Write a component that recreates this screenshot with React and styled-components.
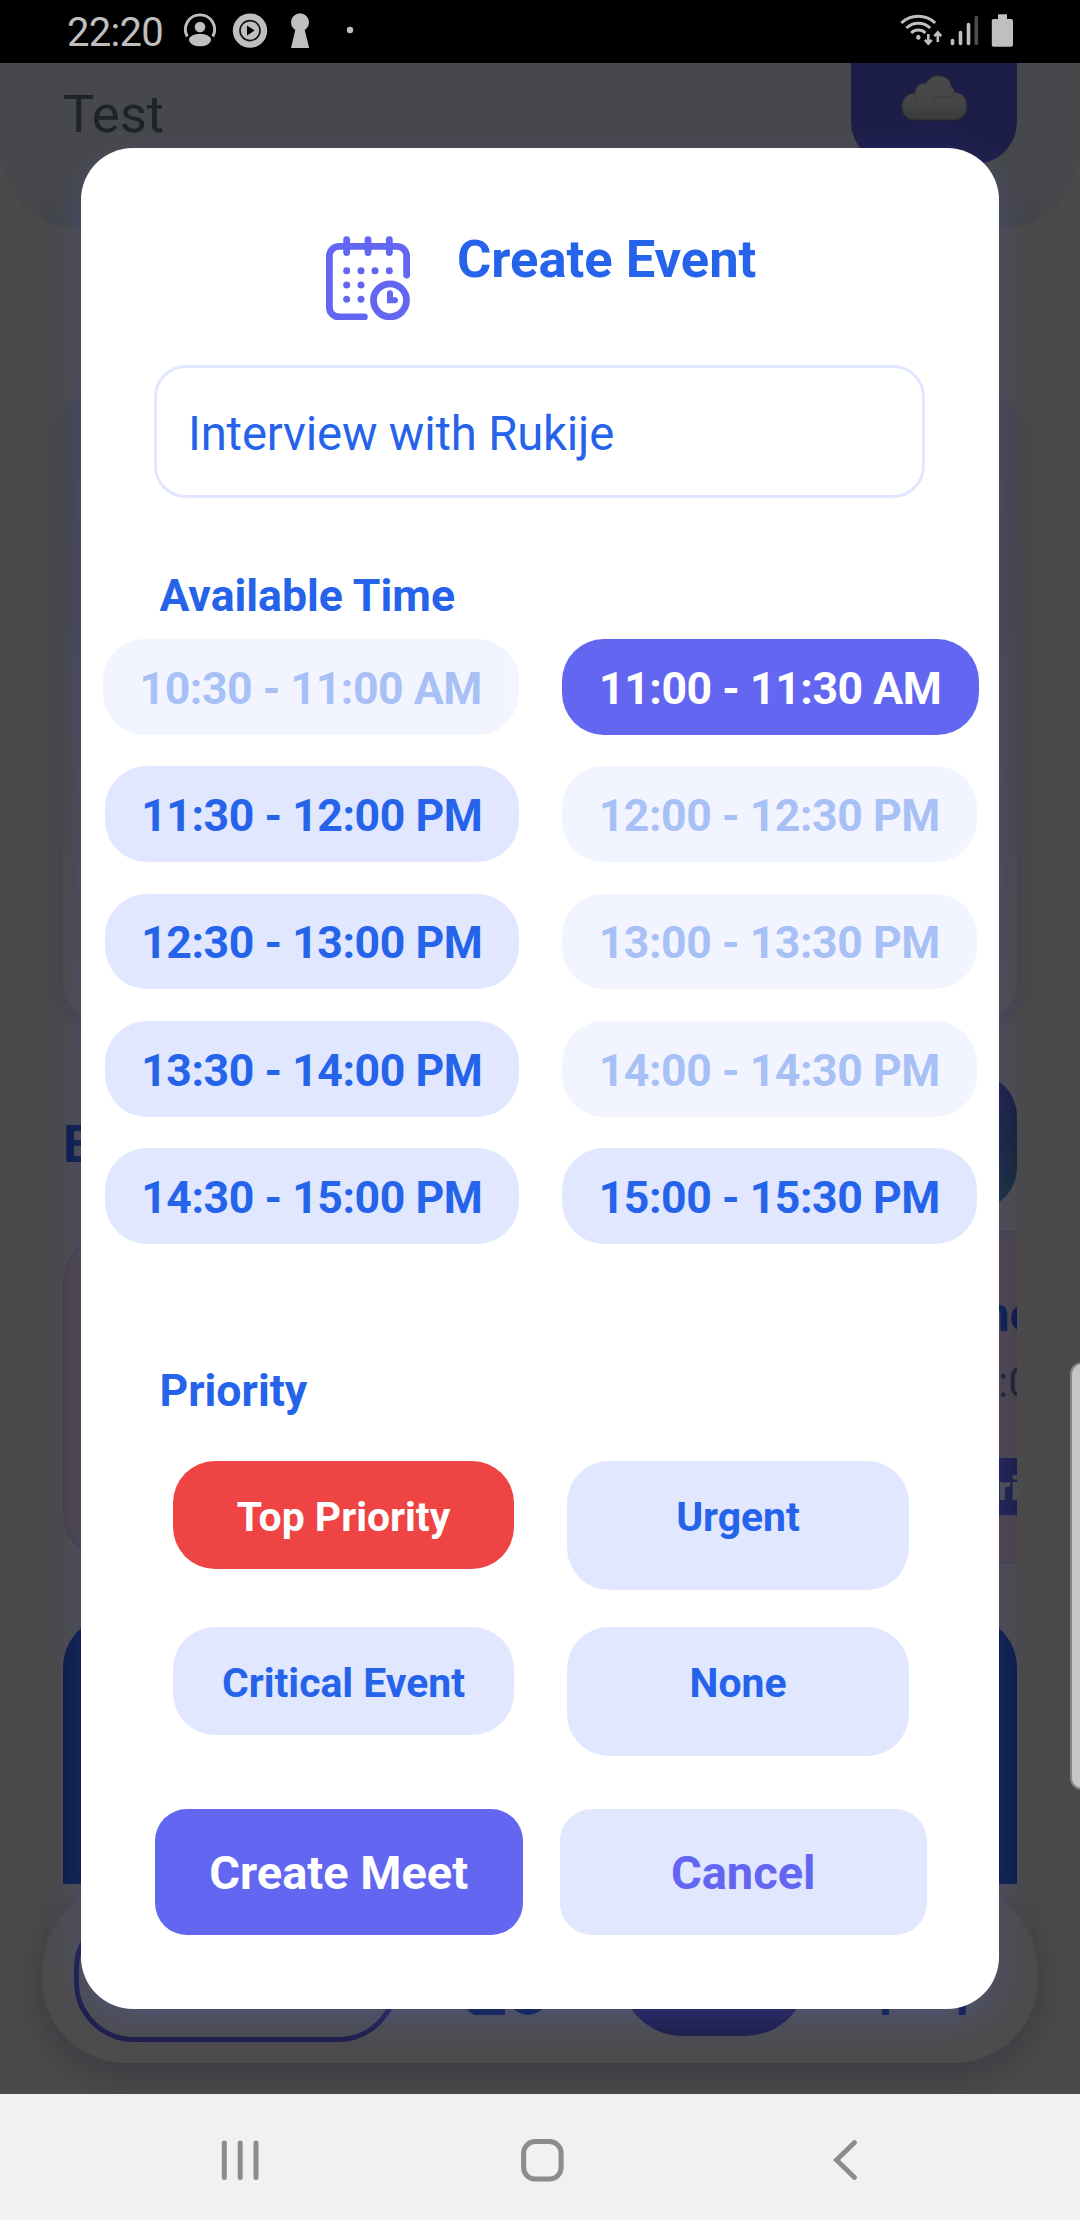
import React from "react";
import styled, { createGlobalStyle } from "styled-components";

const GlobalStyle = createGlobalStyle`
  * { box-sizing: border-box; }
  html, body { margin: 0; padding: 0; background: #000; }
  body { font-family: Roboto, "Noto Sans", sans-serif; }
  button, input { font-family: inherit; border: 0; margin: 0; padding: 0; }
`;

const Phone = styled.div`
  width: 1080px;
  height: 2220px;
  display: flex;
  flex-direction: column;
  overflow: hidden;
`;

/* ---------- system bars ---------- */

const StatusBar = styled.header`
  height: 63px;
  flex: none;
  background: #000;
  color: #bfbfbf;
  display: flex;
  justify-content: space-between;
  padding: 0 64px 0 67px;
`;

const StatusGroup = styled.div`
  display: flex;
  align-items: flex-start;
  padding-top: 10px;
`;

const Clock = styled.span`
  font-size: 40px;
  line-height: 45px;
  width: 113px;
  letter-spacing: -0.7px;
`;

const NavBar = styled.nav`
  height: 126px;
  flex: none;
  background: #f1f1f1;
  display: flex;
  align-items: flex-start;
  padding: 43px 0 0 218px;
`;

const NavIcon = styled.svg`
  width: 46px;
  height: 46px;
  margin-right: ${(p) => p.$after || 0}px;
`;

/* ---------- screen behind the dialog ---------- */

const Stage = styled.div`
  position: relative;
  height: 2031px;
  flex: none;
  overflow: hidden;
`;

const Screen = styled.main`
  height: 100%;
  background: #f8f8f8;
  display: flex;
  flex-direction: column;
`;

const ProfileHeader = styled.section`
  height: 165px;
  flex: none;
  background: linear-gradient(#eef0fb 0, #ecf0fb 125px, #dfe5f6 165px);
  border-radius: 0 0 79px 79px;
  display: flex;
  justify-content: space-between;
  align-items: flex-start;
  padding: 0 63px;
`;

const ProfileName = styled.div`
  font-size: 52.5px;
  line-height: 62px;
  margin-top: 20px;
  color: #64748b;
`;

const WeatherTile = styled.div`
  width: 166px;
  height: 101px;
  background: #6366f1;
  border-radius: 0 0 42px 42px;
  padding: 12px 0 0 50px;
`;

const Body = styled.div`
  padding: 0 63px;
  display: flex;
  flex-direction: column;
`;

const SummaryCard = styled.div`
  margin-top: 161px;
  height: 634px;
  border-radius: 42px;
  background: linear-gradient(#e4e7f9, #eeeef8 50%, #fcf8fc);
  box-shadow: 0 6px 24px rgba(90, 100, 180, 0.24);
`;

const SectionRow = styled.div`
  margin-top: 51px;
  height: 136px;
  display: flex;
  justify-content: space-between;
  align-items: center;
`;

const SectionTitle = styled.h2`
  margin: 0;
  padding-top: 4px;
  font-size: 52.5px;
  line-height: 62px;
  font-weight: 700;
  color: #2563eb;
`;

const GradientButton = styled.div`
  width: 240px;
  height: 136px;
  border-radius: 42px;
  background: linear-gradient(172deg, #5a5ce6 15%, #5078bc 60%, #5598bc 100%);
`;

const EventStrip = styled.div`
  margin-top: 21px;
  height: 333px;
  display: flex;
  justify-content: space-between;
`;

const EventCard = styled.div`
  width: ${(p) => p.$w}px;
  height: 333px;
  background: #f8dde8;
  border: 2px solid #d5d8f8;
  border-right-width: ${(p) => (p.$clipped ? 0 : 2)}px;
  border-radius: ${(p) => (p.$clipped ? "53px 0 0 53px" : "53px")};
  overflow: hidden;
  display: flex;
  flex-direction: column;
  align-items: flex-start;
`;

const EventName = styled.div`
  width: 34px;
  margin: 54px 0 0 auto;
  white-space: nowrap;
  font-size: 47.25px;
  line-height: 56px;
  font-weight: 700;
  color: #2563eb;
`;

const EventTime = styled.div`
  width: 19px;
  margin: 15px 0 0 auto;
  white-space: nowrap;
  font-size: 42px;
  line-height: 50px;
  color: #64748b;
`;

const EventTag = styled.div`
  width: 60px;
  height: 57px;
  margin: 50px 0 0 auto;
  padding-left: 41px;
  white-space: nowrap;
  font-size: 34px;
  line-height: 61px;
  font-weight: 700;
  color: #fff;
  background: #6366f1;
`;

const NewsBlock = styled.div`
  margin-top: 51px;
  height: 269px;
  background: #2563eb;
  border-radius: 53px 53px 0 0;
`;

const TabBar = styled.div`
  margin: 2px 42px 0;
  height: 177px;
  flex: none;
  border-radius: 84px;
  background: #fff;
  box-shadow: 0 12px 34px rgba(60, 60, 150, 0.28);
  display: flex;
  align-items: flex-start;
  padding: 23px 0 0 32px;
`;

const TabPill = styled.div`
  width: 324px;
  height: 133px;
  border-radius: 60px;
  border: 5px solid #6366f1;
`;

const TabIcon = styled.svg`
  width: 84px;
  height: 84px;
  margin: 22px 0 0 ${(p) => p.$before}px;
`;

const TabAction = styled.div`
  width: 188px;
  height: 127px;
  margin-left: 72px;
  border-radius: 63px;
  background: #6366f1;
`;

const Scrim = styled.div`
  position: absolute;
  inset: 0;
  background: rgba(0, 0, 0, 0.7);
`;

const EdgeHandle = styled.div`
  position: absolute;
  left: 1070px;
  top: 1299px;
  width: 24px;
  height: 428px;
  border-radius: 14px;
  border: 2px solid #858585;
  background: #c6c6c6;
`;

/* ---------- dialog ---------- */

const Dialog = styled.form`
  position: absolute;
  left: 81px;
  top: 85px;
  width: 918px;
  height: 1861px;
  border-radius: 52px;
  background: #fff;
  box-shadow: 0 12px 38px rgba(99, 102, 241, 0.23);
  display: flex;
  flex-direction: column;
  padding: 80px 0 0;
`;

const DialogHeader = styled.div`
  display: flex;
  align-items: flex-start;
  height: 92px;
  padding-left: 245px;
  gap: 47px;
`;

const CalendarIcon = styled.svg`
  width: 84px;
  height: 84.3px;
  margin-top: 7.7px;
`;

const DialogTitle = styled.h1`
  margin: 0;
  font-size: 52.5px;
  line-height: 62px;
  font-weight: 700;
  color: #2563eb;
`;

const NameInput = styled.input`
  display: block;
  width: 771px;
  height: 133px;
  margin: 45px 0 0 73px;
  border: 3px solid #e0e7ff;
  border-radius: 32px;
  padding: 4px 30px 0 31px;
  font-size: 47.25px;
  letter-spacing: -0.17px;
  color: #2563eb;
  outline: none;
`;

const Label = styled.div`
  font-size: 44.6px;
  line-height: 52px;
  font-weight: 700;
  color: #2563eb;
  margin: ${(p) => p.$top}px 0 0 78.5px;
`;

const SlotGrid = styled.div`
  margin-top: 17px;
  padding-left: 22px;
  display: grid;
  grid-template-columns: 416px 417px;
  column-gap: 43px;
  row-gap: 31.5px;
`;

const slotTone = {
  free: ["#e0e7ff", "#2563eb", 1],
  taken: ["#e0e7ff", "#2563eb", 0.4],
  picked: ["#6366f1", "#fff", 1],
};

const Slot = styled.button`
  width: ${(p) => (p.$label.endsWith("AM") ? 416.5 : 414.5)}px;
  height: 95.8px;
  justify-self: ${(p) => (p.$col ? "start" : "end")};
  border-radius: 42px;
  padding-top: 4px;
  white-space: nowrap;
  font-size: 44.6px;
  letter-spacing: -0.45px;
  line-height: 52px;
  font-weight: 700;
  background: ${(p) => slotTone[p.$tone][0]};
  color: ${(p) => slotTone[p.$tone][1]};
  opacity: ${(p) => slotTone[p.$tone][2]};
`;

const PriorityGrid = styled.div`
  margin-top: 44px;
  padding-left: 92px;
  display: grid;
  grid-template-columns: 341px 342px;
  column-gap: 53px;
  row-gap: 36.3px;
`;

const PriorityButton = styled.button`
  height: ${(p) => (p.$tall ? 129.5 : 108.5)}px;
  display: flex;
  align-items: flex-start;
  justify-content: center;
  padding-top: 31px;
  border-radius: 42px;
  white-space: nowrap;
  font-size: 40.9px;
  line-height: 50px;
  font-weight: 700;
  background: ${(p) => (p.$picked ? "#ef4444" : "#e0e7ff")};
  color: ${(p) => (p.$picked ? "#fff" : "#2563eb")};
`;

const Actions = styled.div`
  margin: 52.7px 0 0 74px;
  display: flex;
  gap: 37px;
`;

const ActionButton = styled.button`
  width: 367.5px;
  height: 125.6px;
  padding-top: 3px;
  border-radius: 32px;
  font-size: 47px;
  line-height: 56px;
  font-weight: 700;
  background: ${(p) => (p.$primary ? "#6366f1" : "#e0e7ff")};
  color: ${(p) => (p.$primary ? "#fff" : "#6366f1")};
`;

const slots = [
  ["10:30 - 11:00 AM", "taken"],
  ["11:00 - 11:30 AM", "picked"],
  ["11:30 - 12:00 PM", "free"],
  ["12:00 - 12:30 PM", "taken"],
  ["12:30 - 13:00 PM", "free"],
  ["13:00 - 13:30 PM", "taken"],
  ["13:30 - 14:00 PM", "free"],
  ["14:00 - 14:30 PM", "taken"],
  ["14:30 - 15:00 PM", "free"],
  ["15:00 - 15:30 PM", "free"],
];

const priorities = ["Top Priority", "Urgent", "Critical Event", "None"];

const dots = [
  [170, 181], [213, 181], [255, 181], [298, 181],
  [170, 224], [213, 224], [170, 267], [213, 267],
];

function StatusLeftIcons() {
  return (
    <svg width="180" height="44" viewBox="180 10 180 44" fill="#bfbfbf">
      <path d="M187.2 36.5a14.6 14.6 0 1 1 25.6 0" fill="none" stroke="#bfbfbf" strokeWidth="2.9" />
      <circle cx="200" cy="27" r="5.3" />
      <ellipse cx="200" cy="40" rx="11" ry="6.3" />
      <circle cx="250" cy="30.6" r="17.2" />
      <circle cx="250" cy="30.6" r="10" fill="none" stroke="#111" strokeWidth="1.6" />
      <path d="M247 25.6v10l7.6-5z" fill="#000" />
      <circle cx="300" cy="22.3" r="9" />
      <path d="M296 27h8l5.2 21h-18.2z" />
      <circle cx="350" cy="30" r="3.2" />
    </svg>
  );
}

function StatusRightIcons() {
  return (
    <svg width="118" height="44" viewBox="898 10 118 44" fill="none" stroke="#bfbfbf" strokeWidth="3">
      <path d="M901.4 23a24.5 24.5 0 0 1 33.8 0" />
      <path d="M906.4 28a17.3 17.3 0 0 1 23.8 0" />
      <path d="M911.2 33a10.2 10.2 0 0 1 14.2 0" />
      <ellipse cx="918.3" cy="37.3" rx="2.2" ry="2.5" fill="#bfbfbf" stroke="none" />
      <path d="M928.3 34v9M924.8 39.8l3.5 3.7 3.5-3.7M937.8 42v-9M934.3 36.2l3.5-3.7 3.5 3.7" strokeWidth="2.6" />
      <g strokeWidth="3.6" strokeLinecap="round">
        <path d="M952.5 40.5v3M960.5 32.5v11M968.5 24.5v19" />
        <path d="M976.3 17.5v26" stroke="#4d4d4d" />
      </g>
      <path d="M998 14.2h9v4.8h4.2a1.8 1.8 0 0 1 1.8 1.8v24.2a1.8 1.8 0 0 1-1.8 1.8h-17.6a1.8 1.8 0 0 1-1.8-1.8v-24.2a1.8 1.8 0 0 1 1.8-1.8h4.4z" fill="#bfbfbf" stroke="none" />
    </svg>
  );
}

function Cloud() {
  return (
    <svg width="67" height="46" viewBox="0 0 67 46">
      <defs>
        <linearGradient id="cloudFill" x1="0" y1="0" x2="0" y2="1">
          <stop offset="0" stopColor="#f4f5f5" />
          <stop offset="0.6" stopColor="#e6e8ea" />
          <stop offset="1" stopColor="#b9c1c8" />
        </linearGradient>
      </defs>
      <path
        d="M14 45C5 45 .8 38.5 .8 31.5c0-7 5.2-13 12.7-13.5C14.5 11 19 8 25.5 8 28 3 32 .8 37.5 .8c7 0 12.5 4.5 12.7 10.7 2 1.5 3 3.5 3.3 5.7C61 17 66 23.5 66 31c0 8-5 14-13.5 14z"
        fill="url(#cloudFill)" stroke="#8e959b" strokeWidth="1"
      />
      <path d="M31 27c3-5 9-7 14-4.5M15 18c-2 3-1 7 0 8M45 23c3-.5 7-3 9-5.5" fill="none" stroke="#cdd1d4" strokeWidth="1.5" />
    </svg>
  );
}

export default function App() {
  return (
    <Phone>
      <GlobalStyle />
      <StatusBar>
        <StatusGroup>
          <Clock>22:20</Clock>
          <StatusLeftIcons />
        </StatusGroup>
        <StatusGroup>
          <StatusRightIcons />
        </StatusGroup>
      </StatusBar>

      <Stage>
        <Screen>
          <ProfileHeader>
            <ProfileName>Test</ProfileName>
            <WeatherTile>
              <Cloud />
            </WeatherTile>
          </ProfileHeader>
          <Body>
            <SummaryCard />
            <SectionRow>
              <SectionTitle>E</SectionTitle>
              <GradientButton />
            </SectionRow>
            <EventStrip>
              <EventCard $w={600} />
              <EventCard $w={300} $clipped>
                <EventName>ne</EventName>
                <EventTime>:0</EventTime>
                <EventTag>ri</EventTag>
              </EventCard>
            </EventStrip>
            <NewsBlock />
          </Body>
          <TabBar>
            <TabPill />
            <TabIcon $before={66} viewBox="0 0 84 84" fill="none" stroke="#2563eb" strokeWidth="7">
              <path d="M14 4h50v20M3.5 15v54a12 12 0 0 0 12 12H41" />
              <circle cx="64" cy="63" r="17.5" />
            </TabIcon>
            <TabAction />
            <TabIcon $before={74} viewBox="0 0 84 84" fill="none" stroke="#2563eb" strokeWidth="7">
              <path d="M3.5 84V72a20 20 0 0 1 20-20h38a20 20 0 0 1 19 20l-.3 12" />
              <circle cx="42" cy="24" r="16" />
            </TabIcon>
          </TabBar>
        </Screen>

        <Scrim />

        <Dialog onSubmit={(e) => e.preventDefault()}>
          <DialogHeader>
            <CalendarIcon viewBox="108 77 252 253" fill="none" stroke="#6366f1" strokeWidth="20.5" strokeLinecap="round">
              <path d="M350 194V137a29 29 0 0 0-29-29H147a29 29 0 0 0-29 29V291a29 29 0 0 0 29 29H223" />
              <path d="M170 88v39M234 88v39M298 88v39" />
              <circle cx="300" cy="270" r="49.5" />
              <path d="M300 249v20.5h15" strokeWidth="18" />
              {dots.map(([x, y]) => (
                <circle key={x + "-" + y} cx={x} cy={y} r="10.5" fill="#6366f1" stroke="none" />
              ))}
            </CalendarIcon>
            <DialogTitle>Create Event</DialogTitle>
          </DialogHeader>

          <NameInput defaultValue="Interview with Rukije" />

          <Label $top={72}>Available Time</Label>
          <SlotGrid>
            {slots.map(([label, tone], i) => (
              <Slot key={label} type="button" $label={label} $tone={tone} $col={i % 2}>
                {label}
              </Slot>
            ))}
          </SlotGrid>

          <Label $top={121}>Priority</Label>
          <PriorityGrid>
            {priorities.map((name, i) => (
              <PriorityButton key={name} type="button" $picked={i === 0} $tall={i % 2 === 1}>
                {name}
              </PriorityButton>
            ))}
          </PriorityGrid>

          <Actions>
            <ActionButton type="submit" $primary>Create Meet</ActionButton>
            <ActionButton type="button">Cancel</ActionButton>
          </Actions>
        </Dialog>

        <EdgeHandle />
      </Stage>

      <NavBar>
        <NavIcon $after={255} viewBox="0 0 46 46" stroke="#8c8c8c" strokeWidth="5" strokeLinecap="round">
          <path d="M6.3 6v34.5M22.2 6v34.5M38 6v34.5" />
        </NavIcon>
        <NavIcon $after={264} viewBox="0 0 46 46" fill="none" stroke="#8c8c8c" strokeWidth="5">
          <rect x="4.6" y="4.6" width="37.5" height="37.5" rx="11.5" />
        </NavIcon>
        <NavIcon viewBox="0 0 46 46" fill="none" stroke="#8c8c8c" strokeWidth="4.8" strokeLinecap="round">
          <path d="M25.5 5.5L7.5 23L25.5 40.5" />
        </NavIcon>
      </NavBar>
    </Phone>
  );
}
